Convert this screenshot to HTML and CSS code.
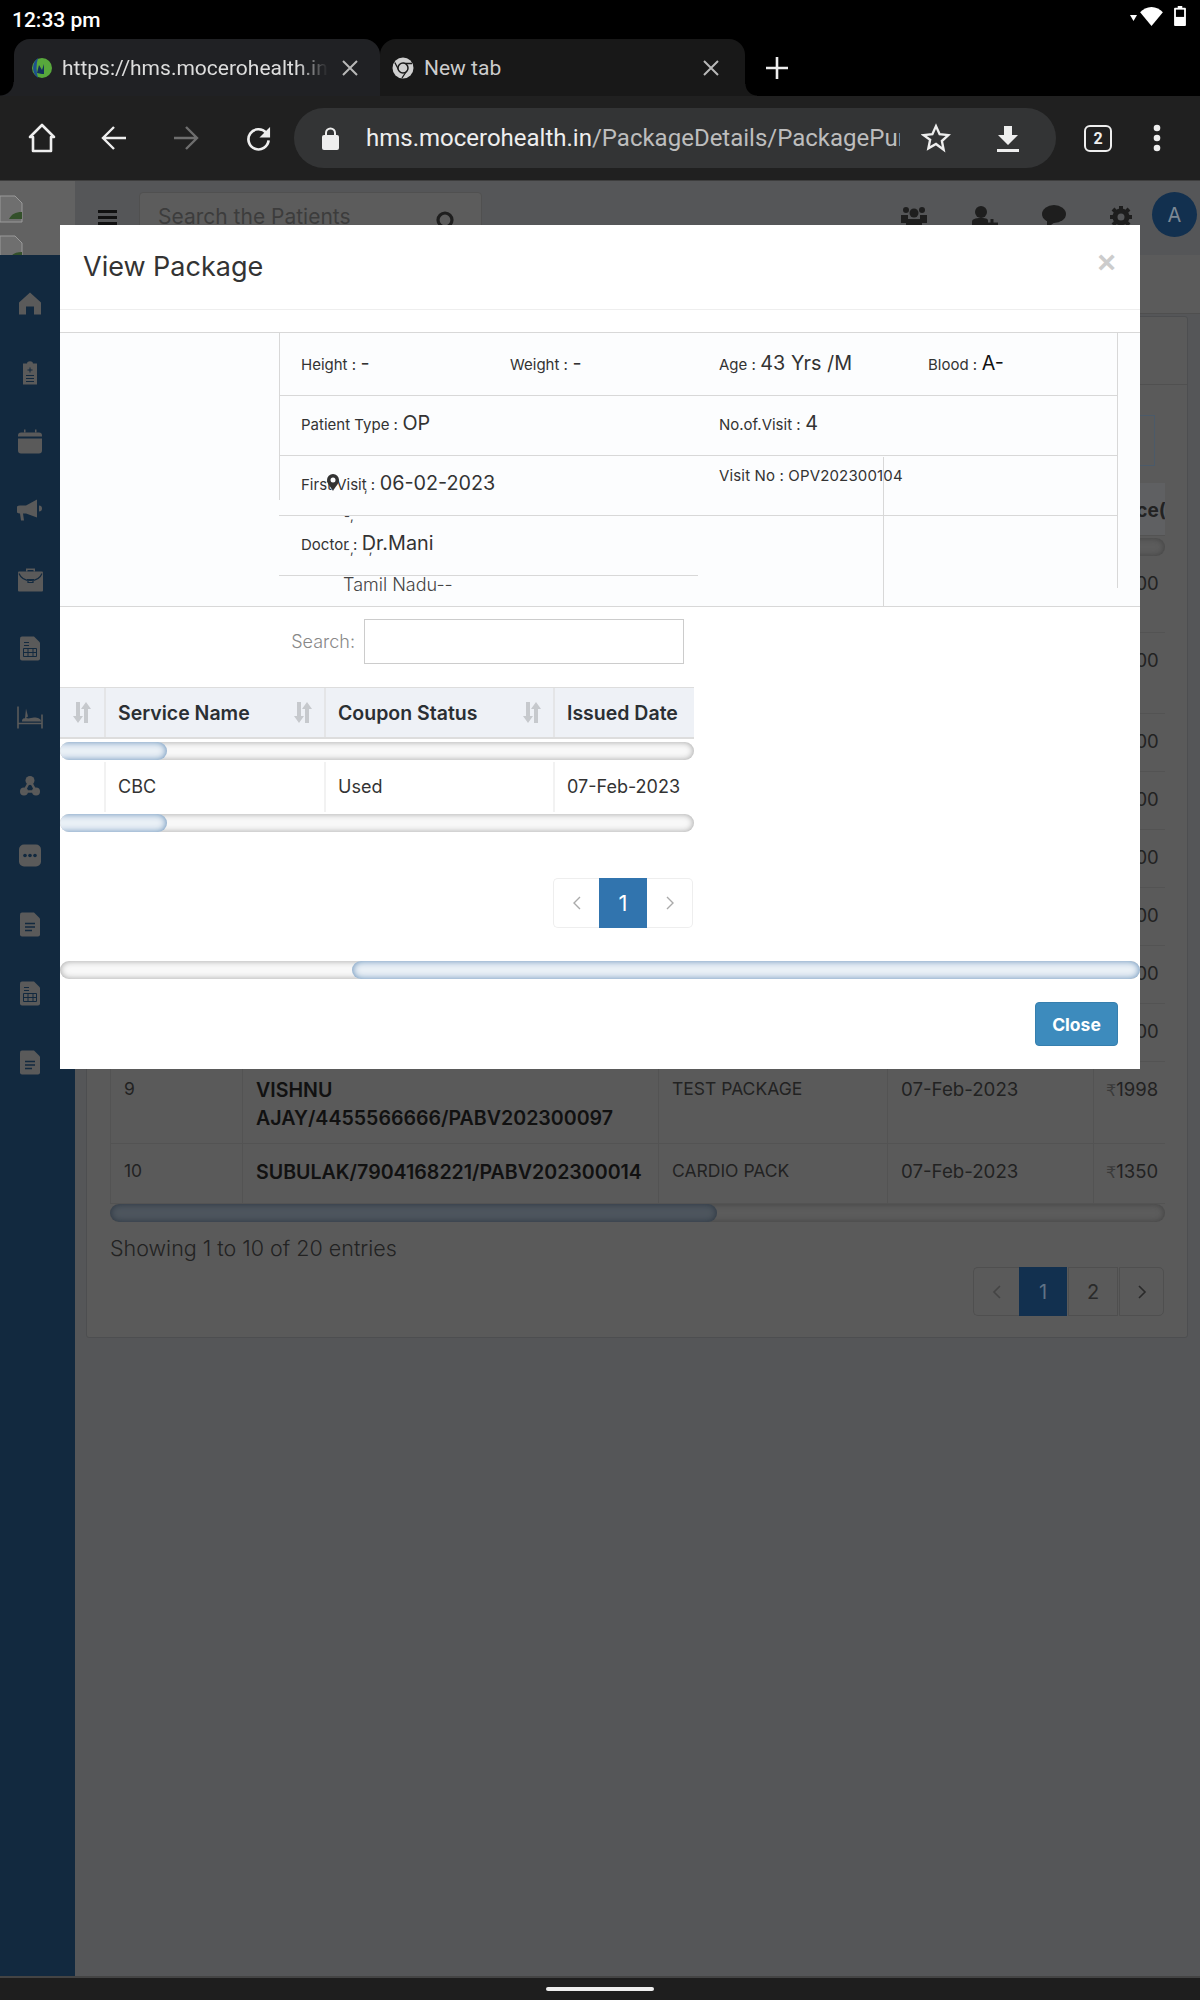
FILE: index.html
```html
<!DOCTYPE html>
<html lang="en">
<head>
  <meta charset="UTF-8">
  <title>View Package</title>
  <link rel="stylesheet" href="styles.css">
</head>
<body>
  <!-- Android status bar -->
  <div class="status-bar">
    <span class="status-time">12:33 pm</span>
    <div class="status-icons">
      <svg class="status-signal" width="7" height="7" viewBox="0 0 7 7"><path d="M0 1h7L3.500 7z" fill="#fff"/></svg>
      <svg class="status-wifi" width="23" height="19" viewBox="0 0 24 20"><path d="M12 20 0 5.500C3 2.500 7.200 0 12 0s9 2.500 12 5.500z" fill="#fff"/></svg>
      <svg width="12" height="20" viewBox="0 0 13 22"><path d="M4 0h5v2h3a1 1 0 0 1 1 1v18a1 1 0 0 1-1 1H1a1 1 0 0 1-1-1V3a1 1 0 0 1 1-1h3z" fill="#fff"/><rect x="2" y="4" width="9" height="8" fill="#000"/></svg>
    </div>
  </div>

  <!-- Browser tabs -->
  <div class="tab-strip">
    <div class="tab tab-active">
      <svg class="favicon" width="21" height="24" viewBox="0 0 21 24"><circle cx="11" cy="12" r="10" fill="#58a83c"/><path d="M7 2C1 6 0 17 7 22c-2-6-2-14 0-20z" fill="#1d4f8f"/><path d="M6 17l2-8 3 5 2-6v10h-2z" fill="#12305c"/></svg>
      <span class="tab-title tab-title-fade">https://hms.mocerohealth.in</span>
      <svg class="tab-close" width="16" height="16" viewBox="0 0 16 16"><path d="M1 1l14 14M15 1 1 15" stroke="#b8b8b8" stroke-width="2"/></svg>
    </div>
    <div class="tab tab-other">
      <svg class="favicon" width="22" height="22" viewBox="0 0 22 22"><circle cx="11" cy="11" r="10.500" fill="#cfcfcf"/><path d="M11 6.500h9M7 13.500 2.800 5.500M15 13.500 10 21" stroke="#1a1a1a" stroke-width="1.300"/><circle cx="11" cy="11" r="5" fill="#cfcfcf" stroke="#1a1a1a" stroke-width="1.500"/></svg>
      <span class="tab-title">New tab</span>
      <svg class="tab-close" width="16" height="16" viewBox="0 0 16 16"><path d="M1 1l14 14M15 1 1 15" stroke="#b8b8b8" stroke-width="2"/></svg>
    </div>
    <svg class="tab-new" width="22" height="22" viewBox="0 0 22 22"><path d="M11 0v22M0 11h22" stroke="#eee" stroke-width="2.600"/></svg>
  </div>

  <!-- Browser toolbar -->
  <div class="toolbar">
    <button class="tool-btn"><svg width="28" height="30" viewBox="0 0 28 30"><path d="M14 2 2 14h3v14h18V14h3z" fill="none" stroke="#eee" stroke-width="2.600" stroke-linejoin="round"/></svg></button>
    <button class="tool-btn"><svg width="26" height="26" viewBox="0 0 26 26"><path d="M25 13H3M13 2 2 13l11 11" fill="none" stroke="#eee" stroke-width="2.400"/></svg></button>
    <button class="tool-btn"><svg width="26" height="26" viewBox="0 0 26 26"><path d="M1 13h22M13 2l11 11-11 11" fill="none" stroke="#6e6e6e" stroke-width="2.400"/></svg></button>
    <button class="tool-btn"><svg width="25" height="25" viewBox="0 0 26 26"><path d="M21 7a10.500 10.500 0 1 0 2.500 8" fill="none" stroke="#eee" stroke-width="2.800"/><path d="M25 1v11H14z" fill="#eee"/></svg></button>
    <div class="url-pill">
      <svg class="url-lock" width="17" height="23" viewBox="0 0 17 23"><path d="M4 9V6a4.500 4.500 0 0 1 9 0v3" fill="none" stroke="#eee" stroke-width="2"/><rect y="8" width="17" height="15" rx="2" fill="#eee"/></svg>
      <div class="url-text"><span class="url-host">hms.mocerohealth.in</span>/PackageDetails/PackagePurchaseList</div>
      <svg class="url-star" width="30" height="30" viewBox="0 0 24 24"><path d="M12 2.500l2.900 6.400 7 .8-5.200 4.700 1.400 6.900L12 16.800l-6.100 3.500 1.400-6.900L2.100 9.700l7-.8z" fill="none" stroke="#eee" stroke-width="1.900"/></svg>
      <svg class="url-download" width="22" height="26" viewBox="0 0 22 26"><path d="M7 0h8v9h6L11 19 1 9h6z" fill="#eee"/><rect y="23" width="22" height="3" fill="#eee"/></svg>
    </div>
    <div class="tab-count">2</div>
    <svg class="tool-menu" width="8" height="28" viewBox="0 0 8 28"><circle cx="4" cy="4" r="3.300" fill="#eee"/><circle cx="4" cy="14" r="3.300" fill="#eee"/><circle cx="4" cy="24" r="3.300" fill="#eee"/></svg>
  </div>

  <!-- Dimmed page behind the modal -->
  <div class="page">
    <div class="logo-cell">
      <svg width="24" height="28" viewBox="0 0 24 28"><path d="M1 1h15l7 7v19H1z" fill="#6f6f6f" stroke="#9a9a9a"/><path d="M10 24c3-5 6-7 13-7v7z" fill="#33502a"/></svg>
      <svg width="24" height="28" viewBox="0 0 24 28"><path d="M1 1h15l7 7v19H1z" fill="#6f6f6f" stroke="#9a9a9a"/><path d="M10 24c3-5 6-7 13-7v7z" fill="#33502a"/></svg>
    </div>
    <div class="topbar">
      <div class="burger"><i></i><i></i><i></i></div>
      <div class="top-search">
        <span>Search the Patients</span>
        <svg width="20" height="26" viewBox="0 0 20 26"><circle cx="9" cy="9" r="7" fill="none" stroke="#1e1e1e" stroke-width="3.200"/><path d="M14 14l5 6" stroke="#1e1e1e" stroke-width="3.500"/></svg>
      </div>
      <div class="top-icons">
        <svg width="26" height="26" viewBox="0 0 26 26"><g fill="#1e1e1e"><circle cx="5" cy="5" r="3"/><circle cx="21" cy="5" r="3"/><circle cx="13" cy="8" r="4.500"/><path d="M0 10h7v8H0zM19 10h7v8h-7zM5 14h16v12H5z"/></g></svg>
        <svg width="27" height="26" viewBox="0 0 27 26"><g fill="#1e1e1e"><circle cx="10" cy="7" r="6"/><path d="M1 26V17c0-3 3-4 9-4s7 1 7 3v10z"/></g><path d="M21 14v10M15 19h12" stroke="#1e1e1e" stroke-width="3"/></svg>
        <svg width="24" height="26" viewBox="0 0 24 26"><ellipse cx="12" cy="9" rx="12" ry="9" fill="#1e1e1e"/><path d="M5 14v9l8-6z" fill="#1e1e1e"/></svg>
        <svg width="22" height="24" viewBox="0 0 22 22"><circle cx="11" cy="11" r="6" fill="none" stroke="#1e1e1e" stroke-width="5"/><path d="M11 0v5M11 17v5M0 11h5M17 11h5M3 3l3.500 3.500M15.500 15.500 19 19M19 3l-3.500 3.500M6.500 15.500 3 19" stroke="#1e1e1e" stroke-width="4"/></svg>
      </div>
      <div class="avatar">A</div>
    </div>

    <nav class="sidebar">
      <svg width="24" height="24" viewBox="0 0 24 24"><path d="M12 1 1 11v12h7v-8h8v8h7V11z" fill="#5a5a5a"/></svg>
      <svg width="16" height="24" viewBox="0 0 16 24"><path d="M1 3h4c0-3 6-3 6 0h4v21H1z" fill="#5a5a5a"/><path d="M8 7v5M5.500 9.500h5M4 15h8M4 18h8M4 21h8" stroke="#12293f"/></svg>
      <svg width="24" height="24" viewBox="0 0 24 24"><path d="M6 0h1.500v3H6zM17 0h1.500v3H17z" fill="#5a5a5a"/><path d="M3 3h18a3 3 0 0 1 3 3v1H0V6a3 3 0 0 1 3-3zM0 9h24v12a3 3 0 0 1-3 3H3a3 3 0 0 1-3-3z" fill="#5a5a5a"/></svg>
      <svg width="26" height="24" viewBox="0 0 26 24"><path d="M9 7 20 1v18L9 15H6l1 7H4l-1-7a4 4 0 0 1 0-8zM22 7a3 3 0 0 1 0 6z" fill="#5a5a5a"/></svg>
      <svg width="25" height="24" viewBox="0 0 25 24"><path d="M8 4V1h9v3h-1.500V2.500h-6V4z" fill="#5a5a5a"/><path d="M1 4h23a1 1 0 0 1 1 1v18a1 1 0 0 1-1 1H1a1 1 0 0 1-1-1V5a1 1 0 0 1 1-1z" fill="#5a5a5a"/><path d="M1 6c2 5 6 7 11.500 7S22 11 24 6M10 12h5v3h-5z" fill="none" stroke="#12293f" stroke-width="1.200"/></svg>
      <svg width="20" height="24" viewBox="0 0 20 24"><path d="M2 0h12l6 6v16a2 2 0 0 1-2 2H2a2 2 0 0 1-2-2V2a2 2 0 0 1 2-2z" fill="#5a5a5a"/><path d="M4 6h5M4 9h5M3.500 12h13v8h-13zM3.500 16h13M8 12v8M13 12v8" fill="none" stroke="#12293f"/></svg>
      <svg width="26" height="22" viewBox="0 0 26 22"><g fill="none" stroke="#5a5a5a" stroke-width="1.600"><path d="M1 0v22M25 8v14M1 17h24"/></g><path d="M5 14c0-3 5-3 6-2l6-1c4 0 7 1 7 4H5zM9 2l2 8-3 2z" fill="#5a5a5a"/></svg>
      <svg width="20" height="22" viewBox="0 0 20 22"><circle cx="10" cy="5" r="4.500" fill="#5a5a5a"/><circle cx="4" cy="16" r="4" fill="#5a5a5a"/><circle cx="16" cy="16" r="4" fill="#5a5a5a"/><path d="M10 5 4 16h12z" fill="none" stroke="#5a5a5a" stroke-width="2.500"/></svg>
      <svg width="22" height="22" viewBox="0 0 22 22"><rect width="22" height="22" rx="5" fill="#5a5a5a"/><circle cx="6" cy="11" r="1.800" fill="#12293f"/><circle cx="11" cy="11" r="1.800" fill="#12293f"/><circle cx="16" cy="11" r="1.800" fill="#12293f"/></svg>
      <svg width="20" height="24" viewBox="0 0 20 24"><path d="M2 0h12l6 6v16a2 2 0 0 1-2 2H2a2 2 0 0 1-2-2V2a2 2 0 0 1 2-2z" fill="#5a5a5a"/><path d="M5 11h10M5 14.500h10M5 18h7" stroke="#12293f" stroke-width="1.400"/></svg>
      <svg width="20" height="24" viewBox="0 0 20 24"><path d="M2 0h12l6 6v16a2 2 0 0 1-2 2H2a2 2 0 0 1-2-2V2a2 2 0 0 1 2-2z" fill="#5a5a5a"/><path d="M4 6h5M4 9h5M3.500 12h13v8h-13zM3.500 16h13M8 12v8M13 12v8" fill="none" stroke="#12293f"/></svg>
      <svg width="20" height="24" viewBox="0 0 20 24"><path d="M2 0h12l6 6v16a2 2 0 0 1-2 2H2a2 2 0 0 1-2-2V2a2 2 0 0 1 2-2z" fill="#5a5a5a"/><path d="M5 11h10M5 14.500h10M5 18h7" stroke="#12293f" stroke-width="1.400"/></svg>
    </nav>

    <main class="content">
      <div class="content-head"></div>
      <div class="card">
        <div class="card-head"></div>
        <div class="card-search"><div class="card-input"></div></div>
        <div class="bg-table">
          <div class="bg-row bg-header"><span></span><span></span><span></span><span></span><span class="bg-price-head">Price(₹)</span></div>
          <div class="scroll scroll-dim"><div class="thumb thumb-dim thumb-bg"></div></div>
          <div class="bg-row row-a"><span>1</span><span></span><span></span><span></span><span class="bg-price"><b class="rupee">₹</b>1000</span></div>
          <div class="bg-row row-b"><span>2</span><span></span><span></span><span></span><span class="bg-price"><b class="rupee">₹</b>1000</span></div>
          <div class="bg-row"><span>3</span><span></span><span></span><span></span><span class="bg-price"><b class="rupee">₹</b>1000</span></div>
          <div class="bg-row"><span>4</span><span></span><span></span><span></span><span class="bg-price"><b class="rupee">₹</b>1000</span></div>
          <div class="bg-row"><span>5</span><span></span><span></span><span></span><span class="bg-price"><b class="rupee">₹</b>1000</span></div>
          <div class="bg-row"><span>6</span><span></span><span></span><span></span><span class="bg-price"><b class="rupee">₹</b>1000</span></div>
          <div class="bg-row"><span>7</span><span></span><span></span><span></span><span class="bg-price"><b class="rupee">₹</b>1000</span></div>
          <div class="bg-row"><span>8</span><span></span><span></span><span></span><span class="bg-price"><b class="rupee">₹</b>1000</span></div>
          <div class="bg-row row-c"><span>9</span><strong>VISHNU AJAY/4455566666/PABV202300097</strong><span>TEST PACKAGE</span><span class="bg-date">07-Feb-2023</span><span class="bg-price"><b class="rupee">₹</b>1998</span></div>
          <div class="bg-row row-d"><span>10</span><strong>SUBULAK/7904168221/PABV202300014</strong><span>CARDIO PACK</span><span class="bg-date">07-Feb-2023</span><span class="bg-price"><b class="rupee">₹</b>1350</span></div>
          <div class="scroll scroll-dim"><div class="thumb thumb-dim thumb-bg"></div></div>
        </div>
        <div class="bg-info">Showing 1 to 10 of 20 entries</div>
        <div class="bg-pager">
          <span class="bg-page bg-prev"><svg width="10" height="14" viewBox="0 0 10 14"><path d="M8 1 2 7l6 6" fill="none" stroke="#444" stroke-width="1.600"/></svg></span>
          <span class="bg-page bg-current">1</span>
          <span class="bg-page bg-num">2</span>
          <span class="bg-page bg-next"><svg width="10" height="14" viewBox="0 0 10 14"><path d="M2 1l6 6-6 6" fill="none" stroke="#2a2a2a" stroke-width="1.600"/></svg></span>
        </div>
      </div>
    </main>

    <!-- Modal -->
    <div class="modal">
      <div class="modal-header">
        <div class="modal-title">View Package</div>
        <div class="modal-x">×</div>
      </div>

      <div class="info">
        <div class="info-row info-row-first">
          <div><label>Height :</label> <span class="val">-</span></div>
          <div><label>Weight :</label> <span class="val">-</span></div>
          <div><label>Age :</label> <span class="val">43 Yrs /M</span></div>
          <div><label>Blood :</label> <span class="val val-black">A-</span></div>
        </div>
        <div class="info-row info-row-half">
          <div><label>Patient Type :</label> <span class="val">OP</span></div>
          <div><label>No.of.Visit :</label> <span class="val">4</span></div>
        </div>
        <div class="info-row info-row-half">
          <div><label>First Visit :</label> <span class="val">06-02-2023</span></div>
          <div class="visit-no">Visit No : OPV202300104</div>
        </div>
        <div class="info-row info-row-half info-row-short">
          <div><label>Doctor :</label> <span class="val">Dr.Mani</span></div>
        </div>
        <!-- stray lines and the address block that overlap the rows -->
        <i class="vline vline-left"></i>
        <i class="vline vline-right"></i>
        <i class="vline vline-mid"></i>
        <svg class="addr-pin" width="12" height="17" viewBox="0 0 12 17"><path d="M6 0a6 6 0 0 1 6 6c0 4-4 7-6 11-2-4-6-7-6-11a6 6 0 0 1 6-6z" fill="#333"/><circle cx="6" cy="6" r="2.500" fill="#fcfdfe"/></svg>
        <span class="addr-bit addr-c">,</span>
        <span class="addr-bit addr-a">-,</span>
        <span class="addr-bit addr-b">-, -,</span>
        <span class="addr-state">Tamil Nadu--</span>
      </div>

      <div class="modal-lower">
        <div class="m-search">
          <label>Search:</label>
          <div class="m-input"></div>
        </div>
        <div class="m-table">
          <div class="m-row m-head">
            <div class="m-cell"><svg class="sort" width="20" height="21" viewBox="0 0 20 21"><path d="M4 0h4v14h3l-5 7-5-7h3zM12 21V7H9l5-7 5 7h-3v14z" fill="#c6c9cd"/></svg></div>
            <div class="m-cell">Service Name<svg class="sort" width="20" height="21" viewBox="0 0 20 21"><path d="M4 0h4v14h3l-5 7-5-7h3zM12 21V7H9l5-7 5 7h-3v14z" fill="#c6c9cd"/></svg></div>
            <div class="m-cell">Coupon Status<svg class="sort" width="20" height="21" viewBox="0 0 20 21"><path d="M4 0h4v14h3l-5 7-5-7h3zM12 21V7H9l5-7 5 7h-3v14z" fill="#c6c9cd"/></svg></div>
            <div class="m-cell">Issued Date</div>
          </div>
          <div class="scroll"><div class="thumb thumb-small"></div></div>
          <div class="m-row m-body">
            <div class="m-cell"></div>
            <div class="m-cell">CBC</div>
            <div class="m-cell">Used</div>
            <div class="m-cell">07-Feb-2023</div>
          </div>
          <div class="scroll scroll-last"><div class="thumb thumb-small"></div></div>
        </div>
        <div class="m-pager">
          <span class="m-page m-prev"><svg width="10" height="14" viewBox="0 0 10 14"><path d="M8 1 2 7l6 6" fill="none" stroke="#aaa" stroke-width="1.400"/></svg></span>
          <span class="m-page m-current">1</span>
          <span class="m-page m-next"><svg width="10" height="14" viewBox="0 0 10 14"><path d="M2 1l6 6-6 6" fill="none" stroke="#aaa" stroke-width="1.400"/></svg></span>
        </div>
        <div class="scroll scroll-outer"><div class="thumb thumb-outer"></div></div>
      </div>

      <div class="modal-footer">
        <button class="btn-close">Close</button>
      </div>
    </div>
  </div>

  <div class="nav-bar"><div class="nav-pill"></div></div>
</body>
</html>
```

FILE: styles.css
```css
* {
  box-sizing: border-box;
}
body {
  margin: 0;
  width: 1200px;
  height: 2000px;
  display: flex;
  flex-direction: column;
  overflow: hidden;
  background: #555658;
  font-family: Inter, 'Liberation Sans', sans-serif;
  color: #333;
}
svg {
  display: block;
  flex-shrink: 0;
}

/* status bar */
.status-bar {
  height: 39px;
  background: #000;
  display: flex;
  justify-content: space-between;
  align-items: center;
  padding: 0 14px 0 12px;
  flex-shrink: 0;
}
.status-time {
  font-family: Roboto, sans-serif;
  font-size: 21px;
  font-weight: 500;
  color: #fff;
}
.status-icons {
  display: flex;
  align-items: center;
  margin-bottom: 7px;
}
.status-signal {
  margin: 2px 3px 0 0;
}
.status-wifi {
  margin-right: 11px;
}

/* tabs */
.tab-strip {
  height: 57px;
  background: #000;
  display: flex;
  padding-left: 14px;
  flex-shrink: 0;
}
.tab {
  position: relative;
  display: flex;
  align-items: center;
  border-radius: 16px 16px 0 0;
  font-family: Roboto, sans-serif;
  font-size: 21px;
}
.tab-active {
  width: 366px;
  background: #202124;
  padding: 0 22px 0 17px;
  color: #ddd;
}
.tab-active::before {
  content: "";
  position: absolute;
  left: -14px;
  bottom: 0;
  width: 14px;
  height: 14px;
  background: radial-gradient(circle at 0 0, #000 13px, #202124 14px);
}
.tab-other {
  width: 365px;
  background: #181818;
  padding: 0 26px 0 12px;
  color: #ccc;
}
.tab-other::after {
  content: "";
  position: absolute;
  right: -12px;
  bottom: 0;
  width: 12px;
  height: 12px;
  background: radial-gradient(circle at 100% 0, #000 11px, #181818 12px);
}
.tab-title {
  flex: 1;
  margin-left: 10px;
  white-space: nowrap;
  overflow: hidden;
}
.tab-title-fade {
  -webkit-mask-image: linear-gradient(to right, #000 84%, transparent 95%);
  mask-image: linear-gradient(to right, #000 84%, transparent 95%);
}
.tab-new {
  margin: 18px 0 0 21px;
}

/* toolbar */
.toolbar {
  height: 84px;
  background: #202020;
  display: flex;
  align-items: center;
  padding-left: 6px;
  flex-shrink: 0;
}
.tool-btn {
  width: 72px;
  height: 60px;
  background: none;
  border: none;
  padding: 0;
  display: flex;
  justify-content: center;
  align-items: center;
}
.url-pill {
  width: 762px;
  height: 60px;
  background: #333435;
  border-radius: 30px;
  display: flex;
  align-items: center;
  padding-left: 28px;
}
.url-text {
  width: 534px;
  margin-left: 27px;
  font-family: Roboto, sans-serif;
  font-size: 24px;
  color: #bdbdbd;
  white-space: nowrap;
  overflow: hidden;
}
.url-host {
  color: #eee;
}
.url-star {
  margin-left: 21px;
}
.url-download {
  margin: 2px 0 0 46px;
}
.tab-count {
  width: 28px;
  height: 27px;
  margin-left: 28px;
  border: 2.500px solid #eee;
  border-radius: 6px;
  color: #eee;
  font-family: Roboto, sans-serif;
  font-size: 16px;
  font-weight: 700;
  display: flex;
  justify-content: center;
  align-items: center;
}
.tool-menu {
  margin-left: 41px;
}

/* dimmed page */
.page {
  position: relative;
  height: 1796px;
  border-top: 1px solid #3e3e3e;
  background: #555658;
  display: grid;
  grid-template-columns: 75px 1fr;
  grid-template-rows: 74px 1fr;
  flex-shrink: 0;
}
.logo-cell {
  background: #626262;
  padding-top: 14px;
  display: flex;
  flex-direction: column;
  gap: 12px;
  overflow: hidden;
}
.logo-cell svg {
  margin-left: -1px;
}
.topbar {
  display: flex;
  align-items: flex-start;
  padding: 11px 3px 0 23px;
}
.burger {
  width: 19px;
  margin-top: 18px;
  display: flex;
  flex-direction: column;
  gap: 3px;
}
.burger i {
  height: 3px;
  background: #111;
}
.top-search {
  width: 343px;
  height: 50px;
  margin-left: 22px;
  border: 1px solid #505050;
  border-radius: 4px;
  background: #5c5c5c;
  display: flex;
  justify-content: space-between;
  padding: 11px 25px 0 18px;
  font-size: 21px;
  color: #3c3c3c;
}
.top-search svg {
  margin-top: 7px;
}
.top-icons {
  display: flex;
  gap: 44px;
  margin: 13px 0 0 auto;
}
.avatar {
  width: 45px;
  height: 45px;
  margin-left: 20px;
  border-radius: 50%;
  background: #12304f;
  color: #7d8894;
  font-size: 20px;
  display: flex;
  justify-content: center;
  align-items: center;
}
.sidebar {
  background: #12293f;
  padding-top: 14px;
  padding-right: 15px;
}
.sidebar svg {
  height: 69px;
  margin: 0 auto;
}
.content {
  min-width: 0;
}
.content-head {
  height: 59px;
  background: #5b5b5b;
  border-bottom: 1px solid #4f4f4f;
}
.card {
  width: 1102px;
  height: 1022px;
  margin: 2px 0 0 11px;
  background: #5a5a5a;
  border: 1px solid #4d4e50;
  border-radius: 3px;
  padding: 0 22px 0 23px;
}
.card-head {
  height: 68px;
  margin: 0 -22px 0 -23px;
  border-bottom: 1px solid #505050;
}
.card-search {
  height: 98px;
  padding-top: 30px;
  display: flex;
  justify-content: flex-end;
}
.card-input {
  width: 320px;
  height: 51px;
  margin-right: 10px;
  border: 1px solid #4b5a69;
}

/* background table */
.bg-row {
  display: grid;
  grid-template-columns: 133px 416px 229px 206px 71px;
  height: 58px;
  border-bottom: 1px solid #535353;
  font-size: 17.500px;
  color: #222;
}
.bg-row > * {
  padding: 16px 0 0 13px;
  border-right: 1px solid #535353;
  font-weight: 400;
  overflow: hidden;
}
.bg-row > :first-child {
  border-left: 1px solid #535353;
}
.bg-row > strong {
  padding-top: 14px;
  font-weight: 600;
  font-size: 19.600px;
  line-height: 28px;
  color: #111;
}
.bg-row > :last-child {
  padding-left: 12px;
  border-right: none;
  white-space: nowrap;
}
.bg-date {
  font-size: 18.700px;
}
.bg-price {
  font-size: 18.500px;
}
.bg-header {
  height: 53px;
  margin-bottom: 2px;
  background: #5f6062;
}
.bg-row > .bg-price-head {
  padding-left: 17px;
  font-weight: 700;
  font-size: 19px;
}
.row-a {
  height: 77px;
}
.row-b {
  height: 81px;
}
.row-c {
  height: 82px;
}
.row-d {
  height: 60px;
}
.rupee {
  font-family: 'DejaVu Sans', sans-serif;
  font-weight: 400;
  font-size: 16px;
  color: #3a3a3a;
}
.bg-info {
  margin-top: 14px;
  font-size: 21.500px;
  font-weight: 300;
  line-height: 24px;
  color: #222;
}
.bg-pager {
  display: flex;
  justify-content: flex-end;
  margin: 7px 1px 0 0;
  height: 49px;
  font-size: 20px;
  color: #2a2a2a;
}
.bg-page {
  display: flex;
  justify-content: center;
  align-items: center;
  border: 1px solid #4f4f4f;
}
.bg-prev {
  width: 46px;
  border-right: none;
  border-radius: 5px 0 0 5px;
}
.bg-current {
  width: 48px;
  background: #12304f;
  border-color: #12304f;
  color: #5f7286;
}
.bg-num {
  width: 50px;
  margin-left: 1px;
}
.bg-next {
  width: 45px;
  margin-left: 1px;
  border-radius: 0 5px 5px 0;
}

/* fake scrollbars */
.scroll {
  height: 18px;
  border-radius: 9px;
  background: #f8f8f8;
  box-shadow: inset 0 0 6px #a0a0a0;
  overflow: hidden;
}
.thumb {
  height: 18px;
  border-radius: 9px;
  background: #eaf0f6;
  box-shadow: inset 0 0 7px #5f8ab5;
}
.scroll.scroll-dim {
  background: #5c5c5c;
  box-shadow: inset 0 0 6px #404040;
}
.thumb.thumb-dim {
  background: #4e565e;
  box-shadow: inset 0 0 7px #2a3440;
}
.thumb-bg {
  width: 607px;
}
.thumb-small {
  width: 127px;
  margin-left: -20px;
}
.thumb-outer {
  width: 788px;
  margin-left: 292px;
}

/* modal */
.modal {
  position: absolute;
  top: 44px;
  left: 60px;
  width: 1080px;
  height: 844px;
  background: #fff;
  overflow: hidden;
}
.modal-header {
  height: 85px;
  border-bottom: 1px solid #eee;
  padding: 25px 24px 0 23px;
  display: flex;
  justify-content: space-between;
}
.modal-title {
  font-size: 27px;
  line-height: 33px;
  color: #333;
}
.modal-x {
  font-size: 32px;
  font-weight: 700;
  line-height: 24px;
  color: #ccc;
  font-family: 'Liberation Sans', sans-serif;
}
.info {
  position: relative;
  height: 275px;
  margin-top: 22px;
  padding-left: 219px;
  background: #fcfdfe;
  border-top: 1px solid #d8d8d8;
  border-bottom: 1px solid #d8d8d8;
}
.info-row {
  width: 839px;
  height: 60px;
  padding: 0 0 5px 22px;
  display: grid;
  grid-template-columns: repeat(4, 209px);
  align-items: center;
  border-bottom: 1px solid #d8d8d8;
}
.info-row-first {
  height: 63px;
  padding-bottom: 2px;
}
.info-row-half {
  grid-template-columns: 418px 1fr;
}
.info-row-short {
  width: 419px;
}
.info-row label {
  font-size: 15px;
}
.val {
  font-size: 19.800px;
  color: #333;
}
.val-black {
  color: #111;
}
.visit-no {
  align-self: start;
  padding-top: 10px;
  font-size: 15px;
  letter-spacing: .15px;
}
.vline {
  position: absolute;
  width: 1px;
  background: #d8d8d8;
}
.vline-left {
  left: 219px;
  top: 0;
  height: 167px;
}
.vline-right {
  left: 1057px;
  top: 0;
  height: 255px;
}
.vline-mid {
  left: 823px;
  top: 124px;
  bottom: 0;
}
.addr-pin {
  position: absolute;
  left: 267px;
  top: 141px;
}
.addr-bit {
  position: absolute;
  font-size: 13px;
  color: #444;
}
.addr-a {
  left: 284px;
  top: 175px;
}
.addr-b {
  left: 284px;
  top: 208px;
  word-spacing: 5.500px;
}
.addr-c {
  left: 304px;
  top: 146px;
}
.addr-state {
  position: absolute;
  left: 283px;
  top: 241px;
  font-size: 18px;
  font-weight: 300;
  color: #444;
}

/* lower part of the modal */
.modal-lower {
  padding-top: 12px;
}
.m-search {
  width: 624px;
  display: flex;
  justify-content: flex-end;
  align-items: center;
  gap: 9px;
  font-size: 18px;
  font-weight: 300;
  color: #888;
}
.m-input {
  width: 320px;
  height: 45px;
  border: 1px solid #ccc;
}
.m-table {
  width: 634px;
  margin-top: 23px;
}
.m-table .scroll {
  margin: 3px 0 2px;
}
.m-table .scroll-last {
  margin: 2px 0 0;
}
.m-row {
  display: grid;
  grid-template-columns: 46px 220px 229px 139px;
}
.m-head {
  height: 52px;
  background: #eef1f6;
  border-top: 1px solid #ddd;
  border-bottom: 2px solid #ddd;
  font-size: 19.500px;
  font-weight: 600;
  color: #2b2f33;
}
.m-body {
  height: 50px;
  font-size: 18px;
  color: #333;
}
.m-cell {
  display: flex;
  align-items: center;
  justify-content: space-between;
  padding: 0 11px 0 12px;
  border-right: 2px solid #e4e5e7;
  white-space: nowrap;
}
.m-body .m-cell {
  padding-bottom: 2px;
  border-right-color: #f2f2f2;
}
.m-cell:last-child {
  border-right: none;
}
.m-pager {
  width: 633px;
  height: 50px;
  margin-top: 46px;
  display: flex;
  justify-content: flex-end;
}
.m-page {
  display: flex;
  justify-content: center;
  align-items: center;
  border: 1px solid #eee;
}
.m-prev {
  width: 46px;
  border-right: none;
  border-radius: 5px 0 0 5px;
}
.m-current {
  width: 48px;
  background: #3174ae;
  border-color: #3174ae;
  color: #fff;
  font-size: 22px;
}
.m-next {
  width: 46px;
  border-left: none;
  border-radius: 0 5px 5px 0;
}
.scroll-outer {
  margin-top: 33px;
}
.modal-footer {
  display: flex;
  justify-content: flex-end;
  padding: 23px 22px 0 0;
}
.btn-close {
  width: 83px;
  height: 44px;
  background: #3d8bbd;
  border: 1px solid #367fae;
  border-radius: 4px;
  color: #fff;
  font-family: inherit;
  font-size: 17.500px;
  font-weight: 700;
}

/* android nav bar */
.nav-bar {
  height: 24px;
  background: #1e1e1e;
  border-top: 2px solid #444;
  display: flex;
  justify-content: center;
  flex-shrink: 0;
}
.nav-pill {
  width: 108px;
  height: 4px;
  margin-top: 9px;
  border-radius: 2px;
  background: #eee;
}
```
